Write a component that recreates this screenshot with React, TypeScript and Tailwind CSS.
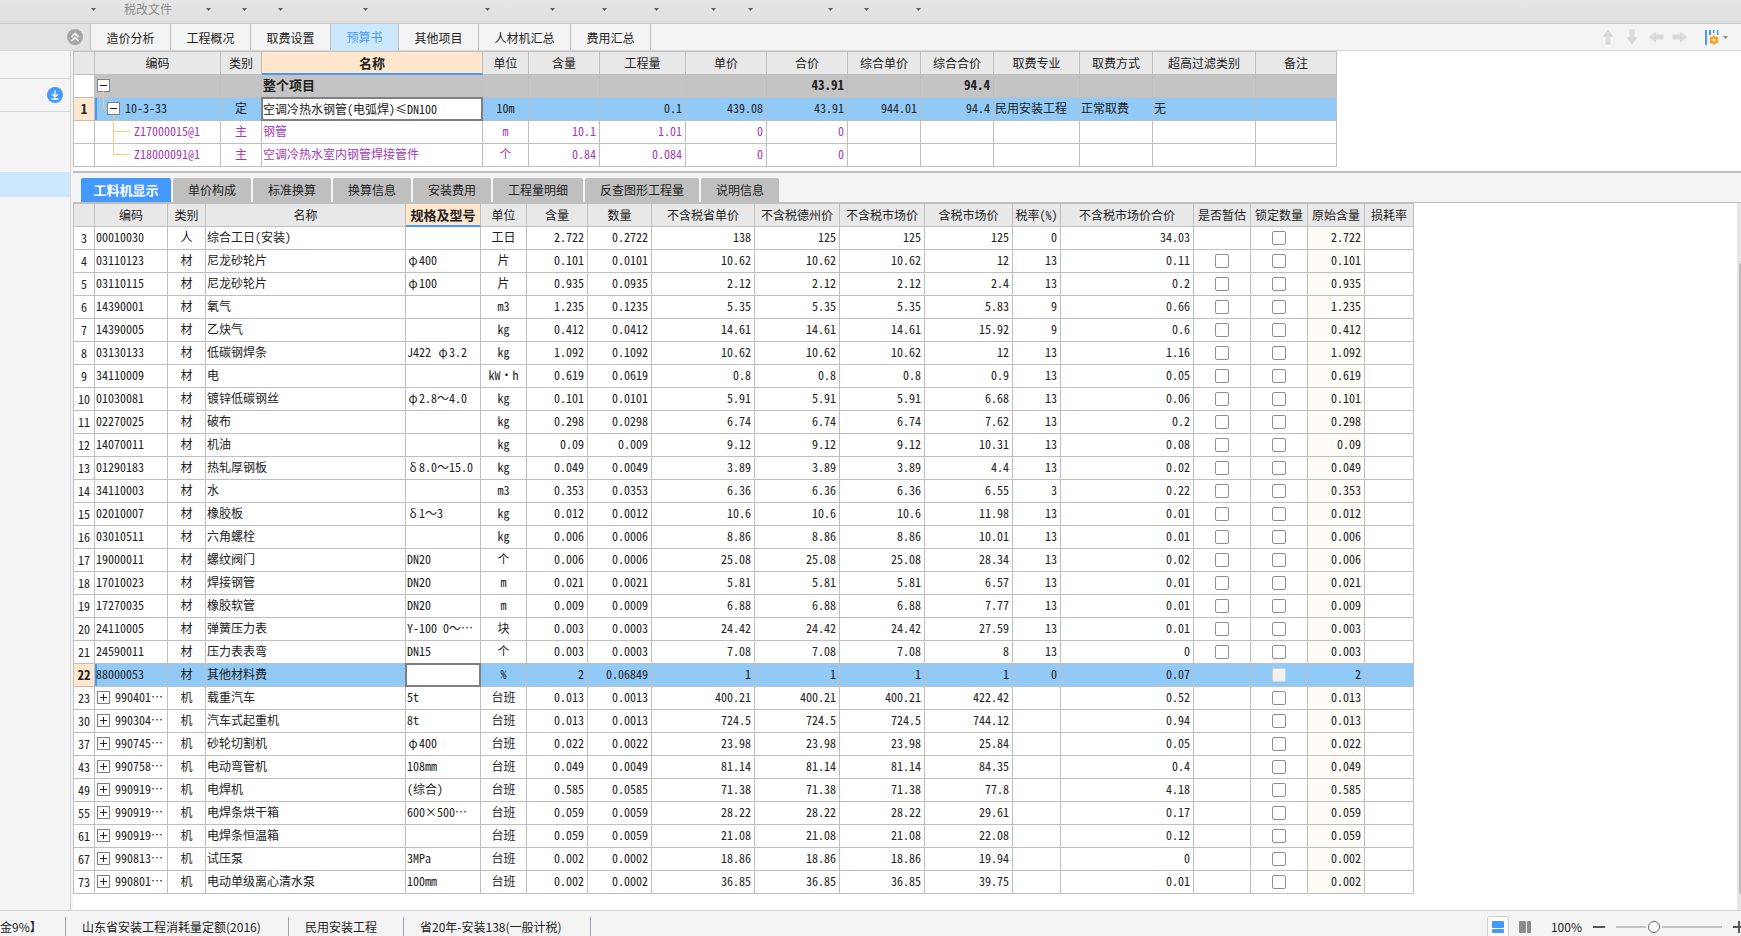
import type { ReactNode } from 'react';
import clsx from 'clsx';

interface Material {
  no: number;
  code: string;
  expandable?: boolean;
  kind: string;
  name: string;
  spec: string;
  unit: string;
  content: string;
  quantity: string;
  provincePrice: string;
  cityPrice: string;
  marketPrice: string;
  taxedPrice: string;
  taxRate: string;
  total: string;
  origin: string;
}

const row = (
  no: number,
  code: string,
  kind: string,
  name: string,
  spec: string,
  unit: string,
  content: string,
  quantity: string,
  price: string,
  taxedPrice: string,
  taxRate: string,
  total: string
): Material => ({
  no,
  code,
  expandable: kind === '机',
  kind,
  name,
  spec,
  unit,
  content,
  quantity,
  provincePrice: no === 3 ? '138' : price,
  cityPrice: price,
  marketPrice: price,
  taxedPrice,
  taxRate,
  total,
  origin: content,
});

const materials: Material[] = [
  row(3, '00010030', '人', '综合工日(安装)', '', '工日', '2.722', '0.2722', '125', '125', '0', '34.03'),
  row(4, '03110123', '材', '尼龙砂轮片', 'φ400', '片', '0.101', '0.0101', '10.62', '12', '13', '0.11'),
  row(5, '03110115', '材', '尼龙砂轮片', 'φ100', '片', '0.935', '0.0935', '2.12', '2.4', '13', '0.2'),
  row(6, '14390001', '材', '氧气', '', 'm3', '1.235', '0.1235', '5.35', '5.83', '9', '0.66'),
  row(7, '14390005', '材', '乙炔气', '', 'kg', '0.412', '0.0412', '14.61', '15.92', '9', '0.6'),
  row(8, '03130133', '材', '低碳钢焊条', 'J422 φ3.2', 'kg', '1.092', '0.1092', '10.62', '12', '13', '1.16'),
  row(9, '34110009', '材', '电', '', 'kW·h', '0.619', '0.0619', '0.8', '0.9', '13', '0.05'),
  row(10, '01030081', '材', '镀锌低碳钢丝', 'φ2.8～4.0', 'kg', '0.101', '0.0101', '5.91', '6.68', '13', '0.06'),
  row(11, '02270025', '材', '破布', '', 'kg', '0.298', '0.0298', '6.74', '7.62', '13', '0.2'),
  row(12, '14070011', '材', '机油', '', 'kg', '0.09', '0.009', '9.12', '10.31', '13', '0.08'),
  row(13, '01290183', '材', '热轧厚钢板', 'δ8.0～15.0', 'kg', '0.049', '0.0049', '3.89', '4.4', '13', '0.02'),
  row(14, '34110003', '材', '水', '', 'm3', '0.353', '0.0353', '6.36', '6.55', '3', '0.22'),
  row(15, '02010007', '材', '橡胶板', 'δ1～3', 'kg', '0.012', '0.0012', '10.6', '11.98', '13', '0.01'),
  row(16, '03010511', '材', '六角螺栓', '', 'kg', '0.006', '0.0006', '8.86', '10.01', '13', '0.01'),
  row(17, '19000011', '材', '螺纹阀门', 'DN20', '个', '0.006', '0.0006', '25.08', '28.34', '13', '0.02'),
  row(18, '17010023', '材', '焊接钢管', 'DN20', 'm', '0.021', '0.0021', '5.81', '6.57', '13', '0.01'),
  row(19, '17270035', '材', '橡胶软管', 'DN20', 'm', '0.009', '0.0009', '6.88', '7.77', '13', '0.01'),
  row(20, '24110005', '材', '弹簧压力表', 'Y-100 0～…', '块', '0.003', '0.0003', '24.42', '27.59', '13', '0.01'),
  row(21, '24590011', '材', '压力表表弯', 'DN15', '个', '0.003', '0.0003', '7.08', '8', '13', '0'),
  row(22, '88000053', '材', '其他材料费', '', '%', '2', '0.06849', '1', '1', '0', '0.07'),
  row(23, '990401…', '机', '载重汽车', '5t', '台班', '0.013', '0.0013', '400.21', '422.42', '', '0.52'),
  row(30, '990304…', '机', '汽车式起重机', '8t', '台班', '0.013', '0.0013', '724.5', '744.12', '', '0.94'),
  row(37, '990745…', '机', '砂轮切割机', 'φ400', '台班', '0.022', '0.0022', '23.98', '25.84', '', '0.05'),
  row(43, '990758…', '机', '电动弯管机', '108mm', '台班', '0.049', '0.0049', '81.14', '84.35', '', '0.4'),
  row(49, '990919…', '机', '电焊机', '(综合)', '台班', '0.585', '0.0585', '71.38', '77.8', '', '4.18'),
  row(55, '990919…', '机', '电焊条烘干箱', '600×500…', '台班', '0.059', '0.0059', '28.22', '29.61', '', '0.17'),
  row(61, '990919…', '机', '电焊条恒温箱', '', '台班', '0.059', '0.0059', '21.08', '22.08', '', '0.12'),
  row(67, '990813…', '机', '试压泵', '3MPa', '台班', '0.002', '0.0002', '18.86', '19.94', '', '0'),
  row(73, '990801…', '机', '电动单级离心清水泵', '100mm', '台班', '0.002', '0.0002', '36.85', '39.75', '', '0.01'),
];

const SELECTED_NO = 22;

const toolbarItems = [
  { width: 'w-24' },
  { width: 'w-[115px]', label: '税改文件' },
  { width: 'w-9' },
  { width: 'w-9' },
  { width: 'w-[85px]' },
  { width: 'w-[122px]' },
  { width: 'w-[65px]' },
  { width: 'w-[52px]' },
  { width: 'w-[52px]' },
  { width: 'w-[57px]' },
  { width: 'w-[37px]' },
  { width: 'w-20' },
  { width: 'w-9' },
  { width: 'w-[52px]' },
];

const pageTabs = [
  { label: '造价分析', width: 'w-20' },
  { label: '工程概况', width: 'w-20' },
  { label: '取费设置', width: 'w-20' },
  { label: '预算书', width: 'w-[68px]' },
  { label: '其他项目', width: 'w-20' },
  { label: '人材机汇总', width: 'w-[92px]' },
  { label: '费用汇总', width: 'w-20' },
];

const detailTabs = [
  { label: '工料机显示', width: 'w-[90px]' },
  { label: '单价构成', width: 'w-[78px]' },
  { label: '标准换算', width: 'w-[78px]' },
  { label: '换算信息', width: 'w-[78px]' },
  { label: '安装费用', width: 'w-[78px]' },
  { label: '工程量明细', width: 'w-[90px]' },
  { label: '反查图形工程量', width: 'w-[114px]' },
  { label: '说明信息', width: 'w-[78px]' },
];

const budgetColumns = [
  { label: '', width: 'w-[21px]' },
  { label: '编码', width: 'w-[126px]' },
  { label: '类别', width: 'w-[41px]' },
  { label: '名称', width: 'w-[221px]', active: true },
  { label: '单位', width: 'w-[46px]' },
  { label: '含量', width: 'w-[71px]' },
  { label: '工程量', width: 'w-[86px]' },
  { label: '单价', width: 'w-[81px]' },
  { label: '合价', width: 'w-[81px]' },
  { label: '综合单价', width: 'w-[73px]' },
  { label: '综合合价', width: 'w-[73px]' },
  { label: '取费专业', width: 'w-[86px]' },
  { label: '取费方式', width: 'w-[73px]' },
  { label: '超高过滤类别', width: 'w-[103px]' },
  { label: '备注', width: 'w-[81px]' },
];

const materialColumns = [
  { label: '', width: 'w-[21px]' },
  { label: '编码', width: 'w-[73px]' },
  { label: '类别', width: 'w-[38px]' },
  { label: '名称', width: 'w-[200px]' },
  { label: '规格及型号', width: 'w-[75px]', active: true },
  { label: '单位', width: 'w-[46px]' },
  { label: '含量', width: 'w-[61px]' },
  { label: '数量', width: 'w-[64px]' },
  { label: '不含税省单价', width: 'w-[103px]' },
  { label: '不含税德州价', width: 'w-[85px]' },
  { label: '不含税市场价', width: 'w-[85px]' },
  { label: '含税市场价', width: 'w-[88px]' },
  { label: '税率(%)', width: 'w-[48px]' },
  { label: '不含税市场价合价', width: 'w-[133px]' },
  { label: '是否暂估', width: 'w-[57px]' },
  { label: '锁定数量', width: 'w-[57px]' },
  { label: '原始含量', width: 'w-[57px]' },
  { label: '损耗率', width: 'w-[49px]' },
];

const Caret = ({ className }: { className?: string }) => (
  <svg className={clsx('h-[3px] w-[5px] shrink-0', className)} viewBox="0 0 5 3">
    <path d="M0 0h5L2.5 3z" fill="currentColor" />
  </svg>
);

const Toggle = ({ open, label, className }: { open?: boolean; label: string; className?: string }) => (
  <button
    aria-label={label}
    aria-expanded={!!open}
    className={clsx('size-[13px] shrink-0 border border-[#808080] bg-white', className)}
  >
    <svg viewBox="0 0 11 11" className="block size-[11px]" stroke="#222" strokeWidth="1">
      <path d={open ? 'M2 5.5h7' : 'M2 5.5h7M5.5 2v7'} />
    </svg>
  </button>
);

interface CellProps {
  children?: ReactNode;
  align?: 'left' | 'center' | 'right';
  className?: string;
}

const Cell = ({ children, align = 'left', className }: CellProps) => (
  <td
    className={clsx(
      'h-[23px] border-r border-b border-[#bfbfbf] p-0 pb-0.5 leading-[20px] whitespace-nowrap',
      align === 'left' && 'pl-px text-left',
      align === 'center' && 'text-center',
      align === 'right' && 'pr-[3px] text-right',
      className
    )}
  >
    {children}
  </td>
);

const GridHead = ({ columns }: { columns: { label: string; width: string; active?: boolean }[] }) => (
  <thead>
    <tr>
      {columns.map((col, i) => (
        <th
          key={i}
          scope="col"
          className={clsx(
            'h-[23px] border-r border-r-[#bfbfbf] p-0 whitespace-nowrap',
            col.width,
            col.active
              ? 'border-b-2 border-b-[#4499ff] bg-[#ffe6cc] text-[13px] leading-[20px] font-bold'
              : 'border-b border-b-[#bfbfbf] bg-[#e8e8e8] leading-[22px] font-normal'
          )}
        >
          {col.label}
        </th>
      ))}
    </tr>
  </thead>
);

// 行号单元格，选中行显示为橙色底
const RowNumber = ({ value, selected }: { value?: number; selected?: boolean }) => (
  <td
    className={clsx(
      'h-[23px] border-r border-b border-[#bfbfbf] p-0 text-center leading-[22px]',
      selected ? 'bg-[#ffe6cc] text-[13px] font-bold' : 'bg-white'
    )}
  >
    {value}
  </td>
);

const CellEditor = ({ label, value }: { label: string; value: string }) => (
  <input
    aria-label={label}
    defaultValue={value}
    className="absolute -top-px -left-px h-[24px] w-[calc(100%+2px)] border-2 border-[#808080] bg-white pb-0.5 outline-none"
  />
);

// 希腊字母按全角宽度显示
const SpecText = ({ text }: { text: string }) => (
  <>
    {text.split(/([φδ])/).map((part, i) =>
      part === 'φ' || part === 'δ' ? (
        <span key={i} className="inline-block w-3 text-center">
          {part}
        </span>
      ) : (
        part
      )
    )}
  </>
);

const BudgetTable = () => (
  <table className="w-[1264px] table-fixed border-separate border-spacing-0 border-t border-l border-[#bfbfbf]">
    <GridHead columns={budgetColumns} />
    <tbody>
      <tr className="bg-[#c4c4c4] text-[13px] font-bold">
        <RowNumber />
        <Cell>
          <div className="flex h-[20px] items-center">
            <Toggle open label="整个项目" className="ml-px" />
          </div>
        </Cell>
        <Cell />
        <Cell>整个项目</Cell>
        <Cell />
        <Cell />
        <Cell />
        <Cell />
        <Cell align="right">43.91</Cell>
        <Cell />
        <Cell align="right">94.4</Cell>
        <Cell />
        <Cell />
        <Cell />
        <Cell />
      </tr>
      <tr className="bg-[#91c9f7]">
        <RowNumber value={1} selected />
        <Cell className="shadow-[inset_2px_0_0_#4499ff]">
          <div className="flex h-[20px] items-center">
            <svg width="11" height="22" className="shrink-0 overflow-visible" fill="none" stroke="#ffc97a">
              <path d="M7.5 -6V11.5H11" />
            </svg>
            <Toggle open label="10-3-33" />
            <span className="ml-[5px]">10-3-33</span>
          </div>
        </Cell>
        <Cell align="center">定</Cell>
        <Cell className="relative">
          <CellEditor label="名称" value="空调冷热水钢管(电弧焊)≤DN100" />
        </Cell>
        <Cell align="center">10m</Cell>
        <Cell />
        <Cell align="right">0.1</Cell>
        <Cell align="right">439.08</Cell>
        <Cell align="right">43.91</Cell>
        <Cell align="right">944.01</Cell>
        <Cell align="right">94.4</Cell>
        <Cell>民用安装工程</Cell>
        <Cell>正常取费</Cell>
        <Cell>无</Cell>
        <Cell />
      </tr>
      <tr className="bg-white text-[#a23bb4]">
        <RowNumber />
        <Cell>
          <div className="flex h-[20px] items-center">
            <svg width="38" height="22" className="shrink-0 overflow-visible" fill="none" stroke="#ffc97a">
              <path d="M17.5 -5V24M17.5 11.5H34" />
            </svg>
            Z17000015@1
          </div>
        </Cell>
        <Cell align="center">主</Cell>
        <Cell>钢管</Cell>
        <Cell align="center">m</Cell>
        <Cell align="right">10.1</Cell>
        <Cell align="right">1.01</Cell>
        <Cell align="right">0</Cell>
        <Cell align="right">0</Cell>
        <Cell />
        <Cell />
        <Cell />
        <Cell />
        <Cell />
        <Cell />
      </tr>
      <tr className="bg-white text-[#a23bb4]">
        <RowNumber />
        <Cell>
          <div className="flex h-[20px] items-center">
            <svg width="38" height="22" className="shrink-0 overflow-visible" fill="none" stroke="#ffc97a">
              <path d="M17.5 -1V11.5H34" />
            </svg>
            Z18000091@1
          </div>
        </Cell>
        <Cell align="center">主</Cell>
        <Cell>空调冷热水室内钢管焊接管件</Cell>
        <Cell align="center">个</Cell>
        <Cell align="right">0.84</Cell>
        <Cell align="right">0.084</Cell>
        <Cell align="right">0</Cell>
        <Cell align="right">0</Cell>
        <Cell />
        <Cell />
        <Cell />
        <Cell />
        <Cell />
        <Cell />
      </tr>
    </tbody>
  </table>
);

const GridCheckbox = ({ label, disabled }: { label: string; disabled?: boolean }) => (
  <input
    type="checkbox"
    aria-label={label}
    disabled={disabled}
    className="mx-auto mt-0.5 block size-[14px] appearance-none rounded-[2px] border border-[#8f8f8f] bg-white disabled:border-[#d0d0d0] disabled:bg-[#f2f2f2]"
  />
);

const MaterialTable = () => (
  <table className="w-[1341px] table-fixed border-separate border-spacing-0 self-start border-t border-l border-[#bfbfbf]">
    <GridHead columns={materialColumns} />
    <tbody>
      {materials.map(item => {
        const selected = item.no === SELECTED_NO;
        const estimable = item.no > 3 && item.no < SELECTED_NO;
        return (
          <tr key={item.no} className={selected ? 'bg-[#91c9f7]' : 'bg-white'}>
            <RowNumber value={item.no} selected={selected} />
            <Cell className={clsx(selected && 'shadow-[inset_2px_0_0_#4499ff]')}>
              {item.expandable ? (
                <div className="flex h-[20px] items-center">
                  <Toggle label={item.code} className="ml-px" />
                  <span className="ml-[5px]">{item.code}</span>
                </div>
              ) : (
                item.code
              )}
            </Cell>
            <Cell align="center">{item.kind}</Cell>
            <Cell>{item.name}</Cell>
            <Cell className={clsx(selected && 'relative')}>
              {selected ? <CellEditor label="规格及型号" value="" /> : <SpecText text={item.spec} />}
            </Cell>
            <Cell align="center">{item.unit}</Cell>
            <Cell align="right">{item.content}</Cell>
            <Cell align="right">{item.quantity}</Cell>
            <Cell align="right">{item.provincePrice}</Cell>
            <Cell align="right">{item.cityPrice}</Cell>
            <Cell align="right">{item.marketPrice}</Cell>
            <Cell align="right">{item.taxedPrice}</Cell>
            <Cell align="right">{item.taxRate}</Cell>
            <Cell align="right">{item.total}</Cell>
            <Cell align="center">{estimable && <GridCheckbox label={`是否暂估 ${item.name}`} />}</Cell>
            <Cell align="center">
              <GridCheckbox label={`锁定数量 ${item.name}`} disabled={selected} />
            </Cell>
            <Cell align="right" className={clsx(!selected && 'bg-[#fffbf7]')}>
              {item.origin}
            </Cell>
            <Cell />
          </tr>
        );
      })}
    </tbody>
  </table>
);

const Toolbar = () => (
  <header className="flex h-6 border-b border-[#cccccc] bg-linear-to-b from-[#e6e6e6] to-[#dfdfdf]">
    {toolbarItems.map((item, i) => (
      <button
        key={i}
        aria-label={item.label ?? '更多'}
        className={clsx('flex h-[18px] shrink-0 items-center text-[#606060]', item.width)}
      >
        {item.label && (
          <span className="pl-[28px] font-['Noto_Sans_CJK_SC',sans-serif] leading-[18px] text-[#8c8c8c]">
            {item.label}
          </span>
        )}
        <Caret className="ml-auto" />
      </button>
    ))}
  </header>
);

const arrows = [
  { label: '上移', d: 'M8 0.5L13.5 8H10.5V15.5H5.5V8H2.5z' },
  { label: '下移', d: 'M8 15.5L13.5 8H10.5V0.5H5.5V8H2.5z' },
  { label: '升级', d: 'M0.5 8L8 2.5V5.5H15.5V10.5H8V13.5z' },
  { label: '降级', d: 'M15.5 8L8 2.5V5.5H0.5V10.5H8V13.5z' },
];

const PageTabs = () => (
  <nav className="flex h-[27px] border-b border-[#d9d9d9] bg-[#f4f4f4] font-['Noto_Sans_CJK_SC',sans-serif]">
    <div className="flex w-[91px] items-center justify-end border-r border-[#c0c0c0] bg-[#e3e3e3] pr-[7px]">
      <button aria-label="收起" className="size-4 rounded-full bg-[#a6a6a6]">
        <svg viewBox="0 0 16 16" className="block size-4" fill="none" stroke="white" strokeWidth="1.5">
          <path d="M4.5 8L8 4.5L11.5 8M4.5 12L8 8.5L11.5 12" />
        </svg>
      </button>
    </div>
    {pageTabs.map(tab => (
      <button
        key={tab.label}
        className={clsx(
          'border-r border-[#c0c0c0]',
          tab.width,
          tab.label === '预算书' ? 'bg-[#cce8ff] text-[#4499ff]' : 'pt-0.5 text-[#222]'
        )}
      >
        {tab.label}
      </button>
    ))}
    <div className="ml-auto flex items-center gap-2 pr-[13px]">
      {arrows.map(arrow => (
        <button key={arrow.label} aria-label={arrow.label}>
          <svg viewBox="0 0 16 16" className="block size-4" fill="#dadada">
            <path d={arrow.d} />
          </svg>
        </button>
      ))}
      <button aria-label="列设置" className="ml-[9px] flex items-center gap-1 text-[#808080]">
        <svg width="14" height="16" viewBox="0 0 14 16">
          <path d="M0 1h2v15H0zM4 1h2v5H4zM8 1h1.500v3H8zM12 1h1.500v5H12z" fill="#4499ff" />
          <g stroke="#ff9c1a" strokeWidth="2.500">
            <path d="M9 6.500v9M5 8.700l8 4.600M13 8.700l-8 4.600" />
          </g>
          <circle cx="9" cy="11" r="2.500" fill="white" stroke="#ff9c1a" strokeWidth="2" />
        </svg>
        <Caret />
      </button>
    </div>
  </nav>
);

const Sidebar = () => (
  <aside className="w-[71px] shrink-0 border-r border-[#d5d5d5] bg-[#f4f4f4]">
    <div className="h-[28px] border-b border-[#d9d9d9]" />
    <div className="flex h-[33px] items-center justify-end border-b border-[#d9d9d9] pr-[7px]">
      <button aria-label="下载" className="size-4 rounded-full bg-[#4499ff]">
        <svg viewBox="0 0 16 16" className="block size-4" fill="none" stroke="white" strokeWidth="1.300">
          <path d="M8 3.500V9.500M5 7L8 10L11 7M4.500 12H11.500" />
        </svg>
      </button>
    </div>
    <div className="mt-[60px] h-[25px] bg-[#cce8ff]" />
  </aside>
);

const DetailTabs = () => (
  <div className="flex gap-0.5 border-t-2 border-b border-[#bfbfbf] bg-[#f4f4f4] pt-[5px] pl-2">
    {detailTabs.map((tab, i) => (
      <button
        key={tab.label}
        className={clsx(
          'h-6 rounded-t-[2px] whitespace-nowrap',
          tab.width,
          i === 0 ? 'bg-[#4499ff] text-[13px] font-bold text-white' : 'bg-[#bfbfbf]'
        )}
      >
        {tab.label}
      </button>
    ))}
  </div>
);

const StatusBar = () => (
  <footer className="flex h-[26px] items-start overflow-hidden border-t border-[#d5d5d5] bg-[#f4f4f4] pt-1.5 font-['Noto_Sans_CJK_SC',sans-serif] leading-[19px] whitespace-nowrap">
    <div className="w-[66px] shrink-0 border-r border-[#9aa3b5]">金9%】</div>
    <div className="w-[223px] shrink-0 border-r border-[#9aa3b5] pl-4">山东省安装工程消耗量定额(2016)</div>
    <div className="w-[115px] shrink-0 border-r border-[#9aa3b5] pl-4">民用安装工程</div>
    <div className="w-[187px] shrink-0 border-r border-[#9aa3b5] pl-4">省20年-安装138(一般计税)</div>
    <div className="ml-auto flex h-[19px] items-center">
      <button aria-label="上下布局" className="h-[22px] w-[22px] rounded-[3px] border border-[#cfcfcf] bg-white">
        <svg viewBox="0 0 12 12" className="mx-auto block size-3" fill="#4499ff">
          <rect width="12" height="7" rx="1" />
          <rect y="8" width="12" height="4" rx="1" />
        </svg>
      </button>
      <button aria-label="左右布局" className="ml-[10px]">
        <svg viewBox="0 0 12 12" className="block size-3" fill="#8c8c8c">
          <rect width="7" height="12" rx="1" />
          <rect x="8" width="4" height="12" rx="1" />
        </svg>
      </button>
      <label htmlFor="zoom" className="ml-5">
        100%
      </label>
      <button aria-label="缩小" className="ml-[11px] h-3 w-3 text-[#555]">
        <svg viewBox="0 0 12 12" className="block size-3">
          <path d="M0 5h12v2H0z" fill="currentColor" />
        </svg>
      </button>
      <input
        id="zoom"
        type="range"
        min={0}
        max={100}
        defaultValue={34}
        className="ml-[11px] h-[2px] w-[106px] appearance-none bg-[#c4c4c4] [&::-webkit-slider-thumb]:size-3 [&::-webkit-slider-thumb]:appearance-none [&::-webkit-slider-thumb]:rounded-full [&::-webkit-slider-thumb]:border [&::-webkit-slider-thumb]:border-[#666] [&::-webkit-slider-thumb]:bg-white [&::-webkit-slider-thumb]:shadow-[0_0_0_2px_#f4f4f4]"
      />
      <button aria-label="放大" className="-mr-1 ml-[11px] h-3 w-3 text-[#555]">
        <svg viewBox="0 0 12 12" className="block size-3">
          <path d="M0 5h12v2H0zM5 0h2v12H5z" fill="currentColor" />
        </svg>
      </button>
    </div>
  </footer>
);

export default function App() {
  return (
    <div
      lang="zh-CN"
      className="flex min-h-screen flex-col overflow-x-hidden bg-white font-['Noto_Sans_Mono_CJK_SC','Noto_Sans_CJK_SC',monospace] text-[12px] text-[#222]"
    >
      <Toolbar />
      <PageTabs />
      <div className="flex flex-1">
        <Sidebar />
        <main className="flex min-w-0 flex-1 flex-col border-l-2 border-[#f4f4f4]">
          <section className="pb-1">
            <BudgetTable />
          </section>
          <DetailTabs />
          <section className="flex flex-1 justify-between">
            <MaterialTable />
            {/* 右侧滚动条 */}
            <div className="flex w-1 shrink-0 flex-col bg-[#e6e6e6] pt-[60px] pb-4 pl-0.5">
              <div className="flex-1 rounded-l-[2px] bg-[#bdbdbd]" />
            </div>
          </section>
        </main>
      </div>
      <StatusBar />
    </div>
  );
}
